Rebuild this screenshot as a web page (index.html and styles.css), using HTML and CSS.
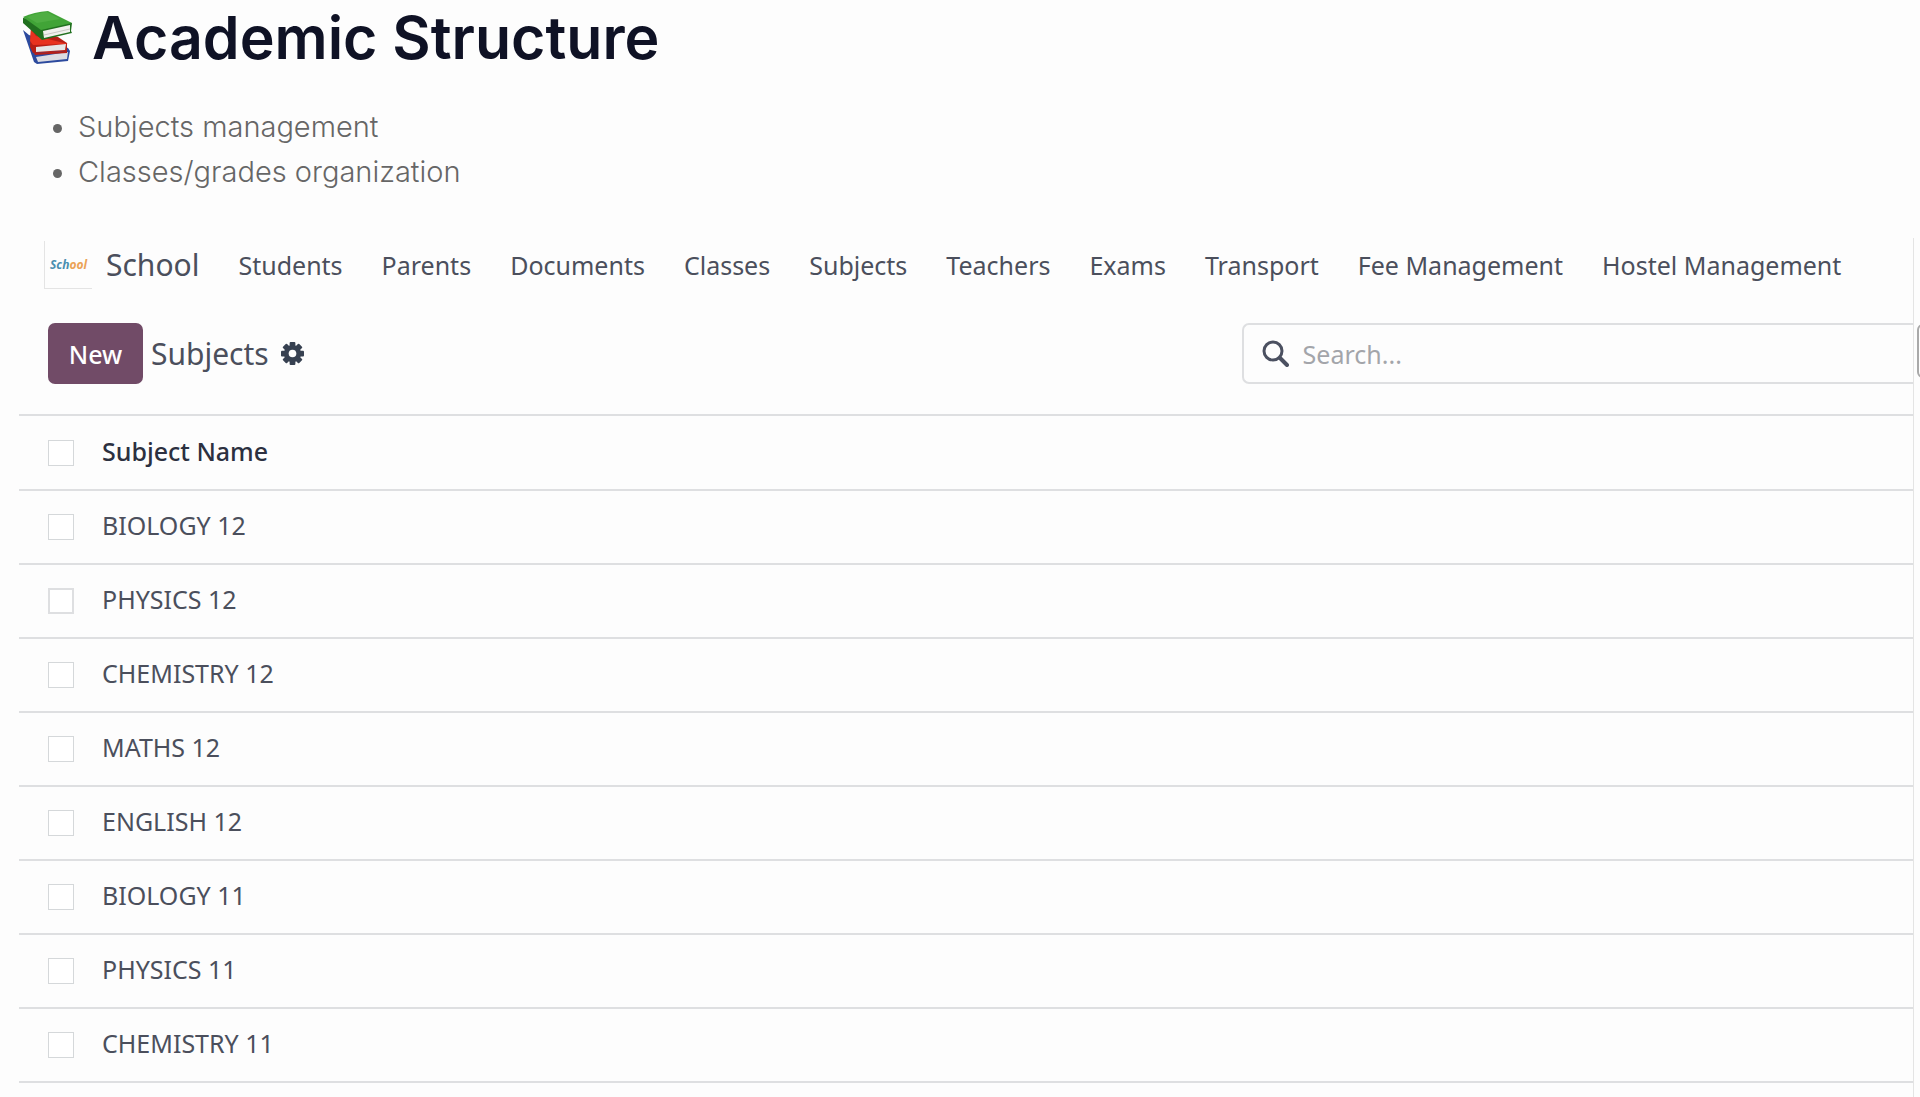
FILE: index.html
```html
<!DOCTYPE html>
<html lang="en">
  <head>
    <meta charset="UTF-8" />
    <title>Academic Structure</title>
    <link rel="stylesheet" href="styles.css">
  </head>
  <body>
    <h1>
      <svg class="books" viewBox="0 0 52 54" aria-hidden="true">
        <path d="M1 19 L7 24 L46 37 L48 40 L46 50 L15 53 L12 51 Z" fill="#2c4a9e" />
        <path d="M14 46 L46 41 L45 48 L16 51 Z" fill="#dcdce2" />
        <path d="M9 17 L36 26 L45 32 L45 40 L11 42 L8 36 Z" fill="#b71f16" />
        <path d="M9 18 L14 25 L46 33 L11 34 L8 30 Z" fill="#e8321f" />
        <path d="M14 36 L44 33 L43 39 L14 41 Z" fill="#e6e6e6" />
        <path d="M12 42 L45 40 L45 42 L13 44 Z" fill="#b71f16" />
        <path d="M1 7 L1 12 L20 29 L50 22 L49 20 L50 12 Z" fill="#21701f" />
        <path d="M21 20 L48 14 L48 21 L22 27 Z" fill="#f1f1ee" />
        <path d="M22 24 L48 18" stroke="#c8c8c4" stroke-width="1" />
        <path d="M1 6 Q12 1 26 0 L50 12 L19 19 Z" fill="#41a437" />
        <path d="M5 6 Q14 2 25 1 L38 8 L15 12 Z" fill="#4fae43" />
      </svg>
      Academic Structure
    </h1>

    <ul class="features">
      <li>Subjects management</li>
      <li>Classes/grades organization</li>
    </ul>

    <div class="app">
      <nav>
        <div class="logo">
          <span class="blue">Sch</span><span class="orange">ool</span>
        </div>
        <a class="brand" href="#">School</a>
        <div class="menu">
          <a href="#">Students</a>
          <a href="#">Parents</a>
          <a href="#">Documents</a>
          <a href="#">Classes</a>
          <a href="#">Subjects</a>
          <a href="#">Teachers</a>
          <a href="#">Exams</a>
          <a href="#">Transport</a>
          <a href="#">Fee Management</a>
          <a href="#">Hostel Management</a>
        </div>
      </nav>

      <div class="controls">
        <button class="new">New</button>
        <span class="title">Subjects</span>
        <button class="settings" aria-label="Settings">
          <svg viewBox="0 0 24 24">
            <g fill="#374151">
              <rect x="9" y="0" width="6" height="24" rx="1" />
              <rect x="9" y="0" width="6" height="24" rx="1" transform="rotate(45 12 12)" />
              <rect x="9" y="0" width="6" height="24" rx="1" transform="rotate(90 12 12)" />
              <rect x="9" y="0" width="6" height="24" rx="1" transform="rotate(135 12 12)" />
              <circle cx="12" cy="12" r="9" />
            </g>
            <circle cx="12" cy="12" r="4" fill="#fdfdfd" />
          </svg>
        </button>
        <label class="search">
          <svg viewBox="0 0 27 27" aria-hidden="true">
            <circle cx="11" cy="11" r="9" fill="none" stroke="#4b5060" stroke-width="3" />
            <path d="M18 18 L25 25" stroke="#4b5060" stroke-width="4" stroke-linecap="round" />
          </svg>
          <input type="text" placeholder="Search..." aria-label="Search" />
        </label>
      </div>

      <table>
        <thead>
          <tr>
            <th class="check"><input type="checkbox" aria-label="Select all" /></th>
            <th>Subject Name</th>
          </tr>
        </thead>
        <tbody>
          <tr>
            <td class="check"><input type="checkbox" id="s1" /></td>
            <td><label for="s1">BIOLOGY 12</label></td>
          </tr>
          <tr>
            <td class="check"><input type="checkbox" id="s2" class="focused" /></td>
            <td><label for="s2">PHYSICS 12</label></td>
          </tr>
          <tr>
            <td class="check"><input type="checkbox" id="s3" /></td>
            <td><label for="s3">CHEMISTRY 12</label></td>
          </tr>
          <tr>
            <td class="check"><input type="checkbox" id="s4" /></td>
            <td><label for="s4">MATHS 12</label></td>
          </tr>
          <tr>
            <td class="check"><input type="checkbox" id="s5" /></td>
            <td><label for="s5">ENGLISH 12</label></td>
          </tr>
          <tr>
            <td class="check"><input type="checkbox" id="s6" /></td>
            <td><label for="s6">BIOLOGY 11</label></td>
          </tr>
          <tr>
            <td class="check"><input type="checkbox" id="s7" /></td>
            <td><label for="s7">PHYSICS 11</label></td>
          </tr>
          <tr>
            <td class="check"><input type="checkbox" id="s8" /></td>
            <td><label for="s8">CHEMISTRY 11</label></td>
          </tr>
        </tbody>
      </table>
      <button class="side-tab" aria-label="Open panel"></button>
    </div>
  </body>
</html>
```

FILE: styles.css
```css
* {
  box-sizing: border-box;
}

body {
  margin: 0;
  min-height: 100vh;
  display: flex;
  flex-direction: column;
  background: #fdfdfd;
  overflow: hidden;
}

h1 {
  display: flex;
  align-items: center;
  gap: 18px;
  margin: 0;
  padding-left: 22px;
  color: #0f1225;
  font: 600 59px/76px Inter, sans-serif;
}

.books {
  width: 52px;
  height: 54px;
}

.features {
  margin: 28px 0 0;
  padding-left: 78px;
  color: #666;
  font: 300 29px/45px Inter, sans-serif;
}

.app {
  position: relative;
  flex: 1;
  margin: 44px 6px 0 19px;
  border-right: 1px solid #e4e4e4;
  color: #4b4f5c;
  font: 25px/34px "Noto Sans", sans-serif;
}

nav {
  display: flex;
  align-items: center;
  height: 54px;
  padding-left: 25px;
}

.logo {
  width: 48px;
  height: 48px;
  border-left: 1px solid #e4e4e4;
  border-bottom: 1px solid #e4e4e4;
  font: italic 700 12px/48px "Open Sans", sans-serif;
  text-align: center;
}

.blue {
  color: #4a8fb0;
}

.orange {
  color: #eba356;
}

a {
  color: inherit;
  text-decoration: none;
  white-space: nowrap;
}

.brand {
  margin-left: 14px;
  font-size: 30px;
}

.menu {
  display: flex;
  gap: 39px;
  margin-left: 39px;
}

.controls {
  display: flex;
  align-items: center;
  margin-top: 31px;
  padding-left: 29px;
}

button {
  padding: 0;
  border: 0;
  background: none;
  font: inherit;
}

.new {
  width: 95px;
  height: 61px;
  border-radius: 7px;
  background: #714b67;
  color: #fff;
  font-weight: 500;
}

.title {
  margin-left: 8px;
  font-size: 30px;
}

.settings {
  margin-left: 12px;
}

.settings svg {
  display: block;
  width: 23px;
  height: 23px;
}

.search {
  display: flex;
  align-items: center;
  gap: 14px;
  width: 36%;
  height: 61px;
  margin-left: auto;
  padding-left: 18px;
  border: 2px solid #dedfe1;
  border-right: 0;
  border-radius: 7px 0 0 7px;
}

.search svg {
  width: 27px;
  height: 27px;
}

.search input {
  flex: 1;
  padding: 0;
  border: 0;
  outline: 0;
  background: none;
  font: inherit;
}

.search input::placeholder {
  color: #a3a5aa;
}

table {
  width: 100%;
  margin-top: 30px;
  border-collapse: collapse;
  border-top: 2px solid #dedfe1;
}

tr {
  height: 74px;
  border-bottom: 2px solid #dedfe1;
}

thead tr {
  height: 75px;
}

th,
td {
  padding: 0 0 4px;
  text-align: left;
}

th {
  color: #2c3040;
  font-weight: 500;
}

.check {
  width: 83px;
  padding: 0 0 0 29px;
}

.check input {
  display: block;
  appearance: none;
  width: 26px;
  height: 26px;
  margin: 0;
  border: 1px solid #d5d8da;
  background: #fff;
}

.check .focused {
  border: 2px solid #dedfe1;
}

/* sticks out past the right edge of the page */
.side-tab {
  position: absolute;
  top: 86px;
  right: -16px;
  width: 12px;
  height: 54px;
  border: 2px solid #a9a9a9;
  border-radius: 6px;
}
```
